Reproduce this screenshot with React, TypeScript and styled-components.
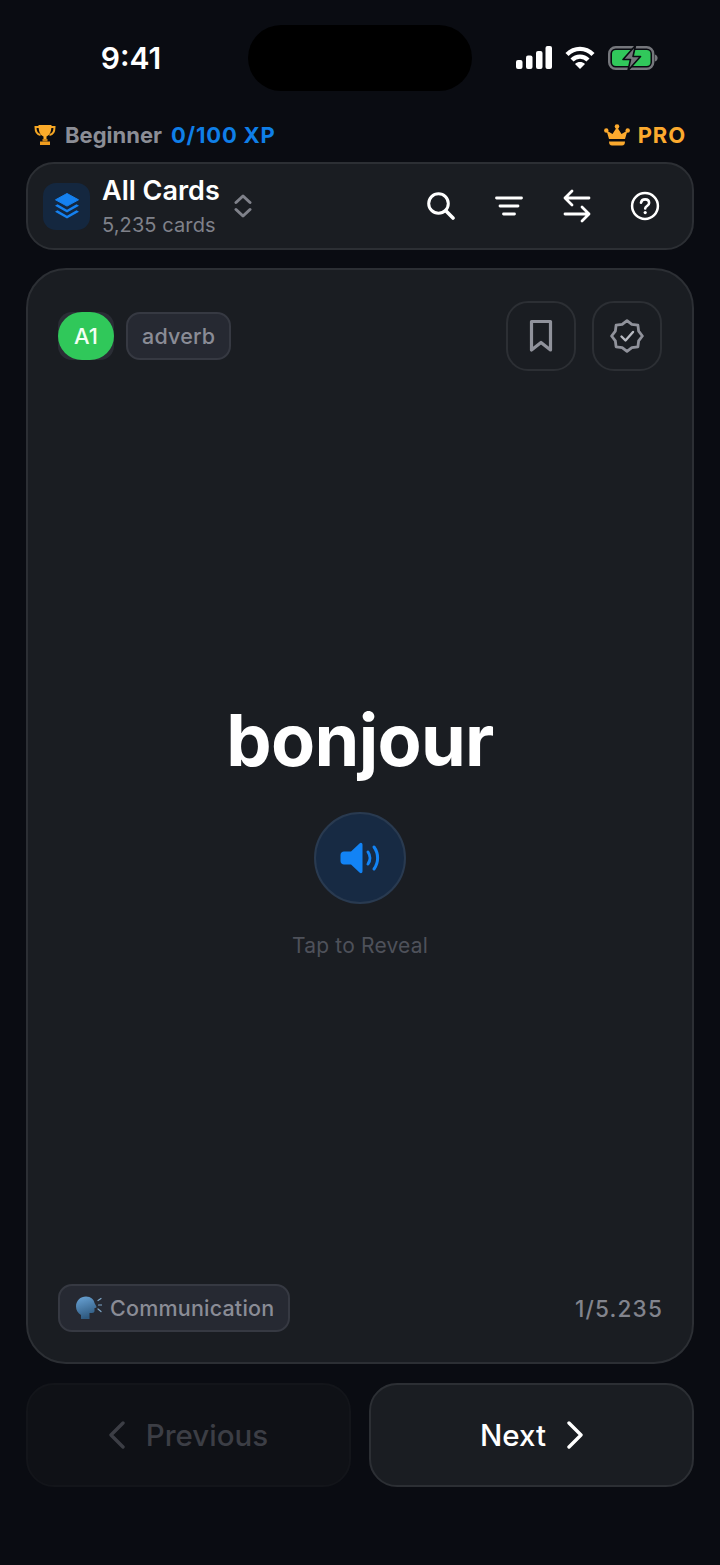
import styled, { createGlobalStyle } from "styled-components";

const GlobalStyle = createGlobalStyle`
  html, body {
    margin: 0;
    padding: 0;
    background: #0a0c12;
  }
  * {
    box-sizing: border-box;
  }
`;

const Page = styled.div`
  width: 720px;
  height: 1565px;
  padding: 25px 26px 0;
  background: #0a0c12;
  font-family: Inter, "Liberation Sans", sans-serif;
  display: flex;
  flex-direction: column;
  overflow: hidden;
`;

const StatusBar = styled.div`
  display: flex;
  align-items: center;
  height: 66px;
  margin: 0 -26px;
`;

const Time = styled.div`
  width: 248px;
  padding-left: 14px;
  text-align: center;
  color: #fff;
  font-size: 30px;
  font-weight: 600;
`;

const Island = styled.div`
  width: 224px;
  height: 66px;
  border-radius: 33px;
  background: #000;
`;

const StatusIcons = styled.div`
  flex: 1;
  display: flex;
  align-items: center;
  gap: 13px;
  padding-left: 44px;
  margin-top: -1px;
`;

const XpRow = styled.div`
  display: flex;
  align-items: center;
  justify-content: space-between;
  height: 24px;
  margin-top: 32px;
  padding: 0 8px;
`;

const XpLeft = styled.div`
  display: flex;
  align-items: center;
  gap: 9px;
  font-size: 22px;
  font-weight: 700;
`;

const Level = styled.span`
  color: #8c8e96;
`;

const Xp = styled.span`
  color: #0f7fe8;
  letter-spacing: 0.8px;
`;

const Pro = styled.div`
  display: flex;
  align-items: center;
  gap: 8px;
  color: #fcaa2e;
  font-size: 22px;
  font-weight: 700;
  letter-spacing: 0.9px;
`;

const Toolbar = styled.div`
  display: flex;
  align-items: center;
  height: 88px;
  margin-top: 15px;
  padding: 0 13px 0 15px;
  background: #1a1d22;
  border: 2px solid #2c2f34;
  border-radius: 28px;
`;

const DeckTile = styled.div`
  width: 47px;
  height: 47px;
  border-radius: 13px;
  background: #14273f;
  display: flex;
  align-items: center;
  justify-content: center;
`;

const DeckText = styled.div`
  margin-left: 12px;
  display: flex;
  flex-direction: column;
`;

const DeckTitle = styled.div`
  color: #fff;
  font-size: 27px;
  font-weight: 600;
  line-height: 32px;
  margin-top: 2px;
`;

const DeckCount = styled.div`
  color: #7f818a;
  font-size: 20px;
  line-height: 28px;
  margin-top: 4px;
  letter-spacing: 0.1px;
`;

const Updown = styled.svg`
  margin-left: 14px;
`;

const ToolIcons = styled.div`
  margin-left: auto;
  display: flex;
`;

const ToolButton = styled.div`
  width: 68px;
  height: 48px;
  display: flex;
  align-items: center;
  justify-content: center;
  color: #fff;
`;

const Card = styled.div`
  height: 1096px;
  margin-top: 18px;
  padding: 31px 30px 30px;
  background: #1a1d22;
  border: 2px solid #2c2f34;
  border-radius: 40px;
  display: flex;
  flex-direction: column;
`;

const CardTop = styled.div`
  display: flex;
  align-items: center;
  justify-content: space-between;
`;

const Tags = styled.div`
  display: flex;
  align-items: center;
  gap: 12px;
`;

const LevelTile = styled.div`
  width: 56px;
  height: 48px;
  border-radius: 14px;
  background: #2a2d35;
`;

const LevelBlob = styled.div`
  height: 100%;
  border-radius: 25px;
  background: #30c85a;
  color: #f2fff5;
  font-size: 22px;
  font-weight: 500;
  display: flex;
  align-items: center;
  justify-content: center;
`;

const Tag = styled.div`
  height: 48px;
  padding: 0 14px;
  border-radius: 14px;
  background: #262932;
  border: 2px solid #363942;
  color: #8a8c96;
  font-size: 21.5px;
  font-weight: 500;
  letter-spacing: 0.2px;
  display: flex;
  align-items: center;
  gap: 8px;
`;

const HeadWrap = styled.span`
  display: flex;
  margin-left: 2px;
`;

const CardActions = styled.div`
  display: flex;
  gap: 16px;
`;

const ActionButton = styled.div`
  width: 70px;
  height: 70px;
  border-radius: 22px;
  border: 2px solid #2c2f34;
  display: flex;
  align-items: center;
  justify-content: center;
`;

const CardCenter = styled.div`
  flex: 1;
  display: flex;
  flex-direction: column;
  align-items: center;
  justify-content: center;
`;

const Word = styled.div`
  color: #fff;
  font-size: 72px;
  font-weight: 700;
  line-height: 84px;
  letter-spacing: -0.7px;
`;

const SpeakButton = styled.div`
  width: 92px;
  height: 92px;
  margin-top: 30px;
  padding-left: 2px;
  border-radius: 50%;
  background: #172a43;
  border: 2px solid #293a50;
  display: flex;
  align-items: center;
  justify-content: center;
`;

const Hint = styled.div`
  margin-top: 30px;
  color: #4e515a;
  font-size: 21px;
  line-height: 24px;
  letter-spacing: 0.2px;
`;

const CardBottom = styled.div`
  display: flex;
  align-items: center;
  justify-content: space-between;
`;

const Counter = styled.div`
  color: #82848d;
  font-size: 22.5px;
  font-weight: 500;
  letter-spacing: 1.2px;
  margin-right: -1px;
`;

const NavRow = styled.div`
  display: flex;
  gap: 18px;
  margin-top: 19px;
`;

const NavButton = styled.div<{ $disabled?: boolean }>`
  flex: 1;
  height: 104px;
  border-radius: 28px;
  display: flex;
  align-items: center;
  justify-content: center;
  gap: 21px;
  font-size: 29.5px;
  font-weight: 500;
  background: ${(p) => (p.$disabled ? "#0f1116" : "#1a1d22")};
  border: 2px solid ${(p) => (p.$disabled ? "#13151a" : "#2c2f34")};
  color: ${(p) => (p.$disabled ? "#3c3e45" : "#fff")};
`;

const SignalIcon = () => (
  <svg width="36" height="24" viewBox="0 0 36 24" fill="#fff">
    <rect x="0" y="14" width="6.5" height="9" rx="2" />
    <rect x="10" y="9.5" width="6.5" height="13.5" rx="2" />
    <rect x="20" y="5" width="6.5" height="18" rx="2" />
    <rect x="29.5" y="0" width="6.5" height="23" rx="2" />
  </svg>
);

const WifiIcon = () => (
  <svg width="30" height="24" viewBox="0 0 30 24" fill="none" stroke="#fff" strokeWidth="4.4">
    <path d="M2 8.500C9.500 1 20.500 1 28 8.500" />
    <path d="M7 14C11.500 9.500 18.500 9.500 23 14" />
    <path d="M15 23l-5-5C13 15.400 17 15.400 20 18z" fill="#fff" stroke="none" />
  </svg>
);

const BatteryIcon = () => (
  <svg width="50" height="26" viewBox="0 0 50 26">
    <rect x="1.200" y="2.200" width="44" height="21.600" rx="6.500" fill="none" stroke="#75777c" strokeWidth="2.400" />
    <rect x="4" y="5" width="38.500" height="16" rx="4" fill="#31c85b" />
    <path d="M46.800 9.500c2 .5 2.800 2 2.800 3.500s-.8 3-2.800 3.500z" fill="#75777c" />
    <path d="M27.500 0.500 15 14.500h7.500L20 25.500 32.500 11.500H25z" fill="#75777c" stroke="#0a0c12" strokeWidth="1.600" strokeLinejoin="round" />
  </svg>
);

const TrophyIcon = () => (
  <svg width="22" height="22" viewBox="0 0 22 22">
    <path d="M5 3H1.500c0 4.500 1.600 7.500 5 8M17 3h3.500c0 4.500-1.600 7.500-5 8" fill="none" stroke="#f5a623" strokeWidth="2" />
    <path d="M4.500 1h13c0 6-1.500 10-5 11.500V15h-3v-2.500C6 11 4.500 7 4.500 1z" fill="#fbab2a" />
    <path d="M6 17.500h10V21H6z" fill="#f09d1e" />
    <path d="M8.500 15h5v2.500h-5z" fill="#c98318" />
  </svg>
);

const CrownIcon = () => (
  <svg width="26" height="22" viewBox="0 0 26 22" fill="#fcaa2e">
    <circle cx="13" cy="2.500" r="2.300" />
    <circle cx="2.300" cy="6.500" r="2.200" />
    <circle cx="23.700" cy="6.500" r="2.200" />
    <path d="M13 3l4.500 7 6-3.500-2.500 8.500H5L2.500 6.500l6 3.500z" />
    <path d="M5 17.500h16c0 2.500-1 4-3 4H8c-2 0-3-1.500-3-4z" />
  </svg>
);

const StackIcon = () => (
  <svg width="26" height="28" viewBox="0 0 26 28" fill="#1581f0">
    <path d="M13 1.500l11.500 6.300L13 14.100 1.500 7.800z" stroke="#1581f0" strokeWidth="1" strokeLinejoin="round" />
    <path d="M3.500 12.300L13 17.700l9.500-5.400 2.500 1.500-12 6.800-12-6.800z" />
    <path d="M3.500 18.300L13 23.700l9.500-5.400 2.500 1.500-12 6.800-12-6.800z" />
  </svg>
);

const SearchIcon = () => (
  <svg width="28" height="28" viewBox="0 0 28 28" fill="none" stroke="#fff" strokeLinecap="round">
    <circle cx="11.500" cy="11.500" r="9.800" strokeWidth="3" />
    <path d="M18.800 18.800L26 26" strokeWidth="3.600" />
  </svg>
);

const FilterIcon = () => (
  <svg width="28" height="20" viewBox="0 0 28 20" fill="none" stroke="#fff" strokeWidth="2.800" strokeLinecap="round">
    <path d="M1.500 2h25M5 10h18M8.500 18h11" />
  </svg>
);

const SwapIcon = () => (
  <svg width="28" height="34" viewBox="0 0 28 34" fill="none" stroke="#fff" strokeWidth="2.800" strokeLinecap="round" strokeLinejoin="round">
    <path d="M9 2L2 9l7 7M2 9h24" />
    <path d="M19 18l7 7-7 7M26 25H2" />
  </svg>
);

const HelpIcon = () => (
  <svg width="30" height="30" viewBox="0 0 30 30" fill="none" stroke="#fff" strokeLinecap="round" strokeLinejoin="round">
    <circle cx="15" cy="15" r="12.900" strokeWidth="2.500" />
    <path d="M11 11.800c.4-2.200 2-3.400 4.100-3.400 2.300 0 4 1.400 4 3.500 0 3-3.900 3.100-3.900 5.600" strokeWidth="2.600" />
    <circle cx="15.200" cy="21.600" r="1.600" fill="#fff" stroke="none" />
  </svg>
);

const BookmarkIcon = () => (
  <svg width="24" height="34" viewBox="0 0 24 34" fill="none" stroke="#90929b" strokeWidth="3.200" strokeLinejoin="round">
    <path d="M2.500 2.500h19v28.500L12 23.500 2.500 31z" />
  </svg>
);

// eight pointed badge outline, like the verified seal in the app
const sealPoints = Array.from({ length: 16 }, (_, i) => {
  const r = i % 2 === 0 ? 15.4 : 12.6;
  const a = (i * Math.PI) / 8 - Math.PI / 2;
  return `${(17 + r * Math.cos(a)).toFixed(2)},${(17 + r * Math.sin(a)).toFixed(2)}`;
}).join(" ");

const SealIcon = () => (
  <svg width="34" height="34" viewBox="0 0 34 34" fill="none" stroke="#90929b" strokeLinejoin="round" strokeLinecap="round">
    <polygon points={sealPoints} strokeWidth="2.800" />
    <path d="M11.500 17.500l4 4 7.500-8.500" stroke="#b9bbc2" strokeWidth="2.400" />
  </svg>
);

const SpeakerIcon = () => (
  <svg width="42" height="32" viewBox="0 0 42 32" fill="#1283f5">
    <path d="M11 9.500L19.500 1.500c1.400-1.300 3-.5 3 1.300v26.400c0 1.800-1.600 2.600-3 1.300L11 22.500H4c-2 0-3.500-1.500-3.500-3.500v-6C.5 11 2 9.500 4 9.500z" />
    <path d="M28 10c2.500 3.500 2.500 8.500 0 12" fill="none" stroke="#1283f5" strokeWidth="3" strokeLinecap="round" />
    <path d="M34 5c4.800 6.500 4.800 15.500 0 22" fill="none" stroke="#1283f5" strokeWidth="3" strokeLinecap="round" />
  </svg>
);

const SpeakingHeadIcon = () => (
  <svg width="26" height="24" viewBox="0 0 26 24">
    <defs>
      <linearGradient id="headFill" x1="0" y1="0" x2="0.300" y2="1">
        <stop offset="0" stopColor="#6ba5d8" />
        <stop offset="1" stopColor="#2f5a80" />
      </linearGradient>
    </defs>
    <path d="M10 0.500c5 0 8 3 8.500 6.500l2 3.800c.3.700-.2 1.200-1.200 1.200h-.8v3c0 1.200-1 2-2.500 2h-2.500V23H5v-4c-3-2-5-4.500-5-8.500C0 4.500 4.500.500 10 .500z" fill="url(#headFill)" />
    <path d="M22 4.500l3-2M22.500 9h3.500M22 13l3 2.500" stroke="#7fa8c9" strokeWidth="1.200" strokeLinecap="round" />
  </svg>
);

const ChevronsIcon = () => (
  <Updown width="18" height="24" viewBox="0 0 18 24" fill="none" stroke="#7f818a" strokeWidth="3" strokeLinecap="round" strokeLinejoin="round">
    <path d="M2 8.500L9 2l7 6.500" />
    <path d="M2 15.500L9 22l7-6.500" />
  </Updown>
);

const NavChevron = ({ left }: { left?: boolean }) => (
  <svg width="16" height="28" viewBox="0 0 16 28" fill="none" stroke="currentColor" strokeWidth="3.400" strokeLinecap="round" strokeLinejoin="round">
    <path d={left ? "M14 2L2 14l12 12" : "M2 2l12 12L2 26"} />
  </svg>
);

export default function App() {
  return (
    <>
      <GlobalStyle />
      <Page>
        <StatusBar>
          <Time>9:41</Time>
          <Island />
          <StatusIcons>
            <SignalIcon />
            <WifiIcon />
            <BatteryIcon />
          </StatusIcons>
        </StatusBar>

        <XpRow>
          <XpLeft>
            <TrophyIcon />
            <Level>Beginner</Level>
            <Xp>0/100 XP</Xp>
          </XpLeft>
          <Pro>
            <CrownIcon />
            PRO
          </Pro>
        </XpRow>

        <Toolbar>
          <DeckTile>
            <StackIcon />
          </DeckTile>
          <DeckText>
            <DeckTitle>All Cards</DeckTitle>
            <DeckCount>5,235 cards</DeckCount>
          </DeckText>
          <ChevronsIcon />
          <ToolIcons>
            <ToolButton>
              <SearchIcon />
            </ToolButton>
            <ToolButton>
              <FilterIcon />
            </ToolButton>
            <ToolButton>
              <SwapIcon />
            </ToolButton>
            <ToolButton>
              <HelpIcon />
            </ToolButton>
          </ToolIcons>
        </Toolbar>

        <Card>
          <CardTop>
            <Tags>
              <LevelTile>
                <LevelBlob>A1</LevelBlob>
              </LevelTile>
              <Tag>adverb</Tag>
            </Tags>
            <CardActions>
              <ActionButton>
                <BookmarkIcon />
              </ActionButton>
              <ActionButton>
                <SealIcon />
              </ActionButton>
            </CardActions>
          </CardTop>
          <CardCenter>
            <Word>bonjour</Word>
            <SpeakButton>
              <SpeakerIcon />
            </SpeakButton>
            <Hint>Tap to Reveal</Hint>
          </CardCenter>
          <CardBottom>
            <Tag>
              <HeadWrap>
                <SpeakingHeadIcon />
              </HeadWrap>
              Communication
            </Tag>
            <Counter>1/5.235</Counter>
          </CardBottom>
        </Card>

        <NavRow>
          <NavButton $disabled>
            <NavChevron left />
            Previous
          </NavButton>
          <NavButton>
            Next
            <NavChevron />
          </NavButton>
        </NavRow>
      </Page>
    </>
  );
}
